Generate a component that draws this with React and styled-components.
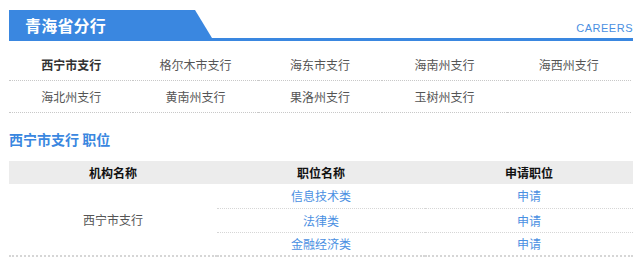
import React from "react";
import styled, { createGlobalStyle } from "styled-components";

const Global = createGlobalStyle`
  html, body { margin: 0; padding: 0; background: #fff; }
  body { font-family: "Noto Sans CJK SC", "Liberation Sans", sans-serif; font-size: 12px; color: #555; }
  * { box-sizing: border-box; }
`;

const BLUE = "#3a87e0";
const LINK = "#4a8fe2";

const Page = styled.div`
  width: 624px;
  margin: 10px 0 0 9px;
`;

const HeaderBar = styled.div`
  display: flex;
  align-items: flex-end;
  justify-content: space-between;
  height: 31px;
  border-bottom: 3px solid ${BLUE};
`;

const Tab = styled.h2`
  margin: 0;
  width: 203px;
  height: 28px;
  background: ${BLUE};
  clip-path: polygon(0 0, 186px 0, 203px 100%, 0 100%);
  color: #fff;
  font-size: 16px;
  font-weight: bold;
  line-height: 30px;
  padding-left: 16px;
  letter-spacing: 0.2px;
`;

const Careers = styled.span`
  font-family: "Liberation Sans", Arial, sans-serif;
  font-size: 11px;
  letter-spacing: 0.5px;
  color: ${LINK};
  line-height: 11px;
  margin-bottom: 4px;
`;

const Nav = styled.div`
  display: grid;
  grid-template-columns: repeat(5, 1fr);
  width: 622px;
  margin-top: 8px;
`;

const NavItem = styled.a`
  display: flex;
  align-items: center;
  justify-content: center;
  height: 32px;
  border-bottom: 1px dotted #c8c8c8;
  color: ${(p) => (p.$active ? "#333" : "#555")};
  font-weight: ${(p) => (p.$active ? "bold" : "normal")};
  font-size: 12px;
  text-decoration: none;
`;

const Title = styled.h3`
  margin: 16px 0 12px;
  font-size: 14px;
  line-height: 20px;
  font-weight: bold;
  color: ${BLUE};
`;

const Table = styled.table`
  width: 624px;
  border-collapse: collapse;
  table-layout: fixed;
`;

const Th = styled.th`
  height: 23px;
  padding: 0;
  background: #ececec;
  color: #111;
  font-weight: bold;
  font-size: 12px;
  text-align: center;
`;

const Td = styled.td`
  height: 24px;
  padding: 0;
  text-align: center;
  font-size: 12px;
  color: ${(p) => (p.$link ? LINK : "#555")};
  border-bottom: ${(p) => (p.$last ? "2px dotted #d6d6d6" : "1px dotted #d6d6d6")};
`;

const branchesRow1 = ["西宁市支行", "格尔木市支行", "海东市支行", "海南州支行", "海西州支行"];
const branchesRow2 = ["海北州支行", "黄南州支行", "果洛州支行", "玉树州支行"];

const jobs = ["信息技术类", "法律类", "金融经济类"];

export default function App() {
  return (
    <>
      <Global />
      <Page>
        <HeaderBar>
          <Tab>青海省分行</Tab>
          <Careers>CAREERS</Careers>
        </HeaderBar>
        <Nav>
          {branchesRow1.map((b, i) => (
            <NavItem key={b} $active={i === 0}>{b}</NavItem>
          ))}
          {branchesRow2.map((b) => (
            <NavItem key={b}>{b}</NavItem>
          ))}
          <NavItem />
        </Nav>
        <Title>西宁市支行 职位</Title>
        <Table>
          <thead>
            <tr>
              <Th>机构名称</Th>
              <Th>职位名称</Th>
              <Th>申请职位</Th>
            </tr>
          </thead>
          <tbody>
            {jobs.map((j, i) => (
              <tr key={j}>
                {i === 0 && (
                  <Td rowSpan={3} $last>西宁市支行</Td>
                )}
                <Td $link $last={i === 2}>{j}</Td>
                <Td $link $last={i === 2}>申请</Td>
              </tr>
            ))}
          </tbody>
        </Table>
      </Page>
    </>
  );
}
